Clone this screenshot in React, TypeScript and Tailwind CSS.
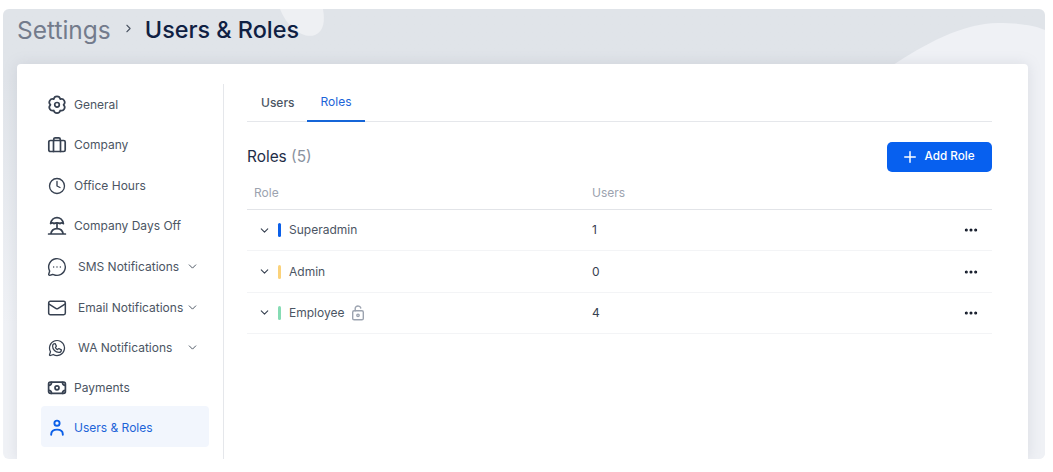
import React from "react";
import { ChevronDown, ChevronRight, Clock, Mail, MessageCircleMore, Plus, Ellipsis } from "lucide-react";
import { PiWhatsappLogo } from "react-icons/pi";

const s = { fill: "none", stroke: "currentColor", strokeWidth: 1.7, strokeLinecap: "round" as const, strokeLinejoin: "round" as const };

function Gear() {
  return (
    <svg width="20" height="20" viewBox="0 0 20 20" {...s}>
      <path d="M6.75 4.17A3.3 3.3 0 0 1 13.25 4.17A3.3 3.3 0 0 1 16.5 9.8A3.3 3.3 0 0 1 13.25 15.43A3.3 3.3 0 0 1 6.75 15.43A3.3 3.3 0 0 1 3.5 9.8A3.3 3.3 0 0 1 6.75 4.17Z" />
      <circle cx="10" cy="9.8" r="2.3" />
    </svg>
  );
}
function Briefcase() {
  return (
    <svg width="20" height="20" viewBox="0 0 20 20" {...s}>
      <rect x="1.8" y="5.5" width="16.4" height="11" rx="1.6" />
      <path d="M6.5 5.5v11M13.5 5.5v11M6.8 5.5V4.2c0-.8.6-1.4 1.4-1.4h3.6c.8 0 1.4.6 1.4 1.4v1.3" />
    </svg>
  );
}
function Beach() {
  return (
    <svg width="20" height="20" viewBox="0 0 20 20" {...s}>
      <path d="M3.6 7.6C4.2 4 7 1.6 10 1.6s5.8 2.4 6.4 6c-1.2-.9-2.4-.9-3.4 0-1-.9-5-.9-6 0-1-.9-2.2-.9-3.4 0Z" />
      <path d="M10 7v5.4M1.6 18h16.8M3.8 18c.5-3.2 3-5.4 6.2-5.4s5.7 2.2 6.2 5.4" />
    </svg>
  );
}
function Money() {
  return (
    <svg width="20" height="20" viewBox="0 0 20 20" {...s}>
      <rect x="1.6" y="4.2" width="16.8" height="11.2" rx="1.8" />
      <circle cx="10" cy="9.8" r="2" />
      <path d="M1.8 7.4c1.6 0 2.6-1 2.8-3M18.2 7.4c-1.6 0-2.6-1-2.8-3M1.8 12.4c1.6 0 2.6 1 2.8 3M18.2 12.4c-1.6 0-2.6 1-2.8 3" />
    </svg>
  );
}
function Person() {
  return (
    <svg width="20" height="20" viewBox="0 0 20 20" {...s} strokeWidth={1.9}>
      <circle cx="10" cy="5.2" r="2.6" />
      <path d="M4.2 16.8v-.6c0-2.8 2.4-4.6 5.8-4.6s5.8 1.8 5.8 4.6v.6" />
    </svg>
  );
}
function OpenLock() {
  return (
    <svg width="14" height="16" viewBox="0 0 14 16" fill="none" stroke="#9ca3af" strokeWidth="1.4" strokeLinecap="round" strokeLinejoin="round">
      <rect x="1.7" y="5.8" width="10.6" height="9" rx="1.4" />
      <path d="M4.2 5.8V3.4C4.2 2 5.4 1 7 1c1.4 0 2.5.8 2.8 2" />
      <circle cx="7" cy="10.3" r="1.2" />
    </svg>
  );
}

const items: { label: string; icon: React.ReactNode; sub?: boolean; active?: boolean; cls: string }[] = [
  { label: "General", icon: <Gear />, cls: "gap-[7px] pt-px" },
  { label: "Company", icon: <Briefcase />, cls: "gap-[7px] pt-px" },
  { label: "Office Hours", icon: <Clock size={18} strokeWidth={1.8} className="mx-px" />, cls: "gap-[7px] pt-[2px]" },
  { label: "Company Days Off", icon: <Beach />, cls: "gap-[7px] pt-px" },
  { label: "SMS Notifications", icon: <MessageCircleMore size={20} strokeWidth={1.7} />, sub: true, cls: "gap-[11px] pt-[3px]" },
  { label: "Email Notifications", icon: <Mail size={20} strokeWidth={1.8} />, sub: true, cls: "gap-[11px] pt-[4px]" },
  { label: "WA Notifications", icon: <PiWhatsappLogo size={20} />, sub: true, cls: "gap-[11px] pt-[4px]" },
  { label: "Payments", icon: <Money />, cls: "gap-[7px] pt-[3px]" },
  { label: "Users & Roles", icon: <Person />, active: true, cls: "gap-[7px] pt-[2px]" },
];

const roles = [
  { name: "Superadmin", color: "bg-[#0b5fe8]", users: 1 },
  { name: "Admin", color: "bg-[#fbd27a]", users: 0 },
  { name: "Employee", color: "bg-[#86dcb4]", users: 4, lock: true },
];

export default function App() {
  return (
    <div className="h-[472px] w-[1053px] overflow-hidden bg-white pl-[3px] pt-[9px] font-['Inter','Liberation_Sans',sans-serif]">
      <div className="relative flex h-[450px] w-[1042px] flex-col overflow-hidden rounded-md bg-gradient-to-b from-[#e0e4e9] from-15% to-[#f0f2f6] to-70%">
        <svg className="absolute left-0 top-0" width="1042" height="450" viewBox="0 0 1042 450" fill="none">
          <path d="M277 0h43c2 12 1 22-8 26-11 4-27-6-35-26Z" fill="#eef0f3" />
          <path d="M890 56c30-20 70-42 105-42 20 0 36 2 47 7v429H890Z" fill="#eff1f5" />
        </svg>
        <div className="relative flex h-[55px] shrink-0 items-start pl-[14px] pt-[4px] text-[24.5px] leading-[34px]">
          <span className="text-[#737b8c]">Settings</span>
          <ChevronRight size={13} strokeWidth={2} className="ml-[11px] mr-[10px] mt-[9px] text-[#4b5563]" />
          <span className="text-[23.4px] font-medium text-[#0f2042]">Users &amp; Roles</span>
        </div>
        <div className="relative ml-[14px] flex w-[1011px] flex-1 rounded-t-[4px] bg-white pl-[24px] pt-[20px] shadow-[0_0_14px_rgba(120,130,150,0.18)]">
          <nav className="flex h-[375px] w-[183px] shrink-0 flex-col border-r border-[#e5e7eb] pr-[14px]">
            {items.map((it) => (
              <div
                key={it.label}
                className={`flex h-[40.3px] shrink-0 items-center rounded-[4px] pl-[6px] text-[12px] ${it.cls} ${
                  it.active ? "bg-[#f2f6fd] text-[#1d64d8]" : "text-[#4b5563]"
                }`}
              >
                <span className={`flex w-[20px] shrink-0 justify-center ${it.active ? "text-[#0b5fe8]" : "text-[#374151]"}`}>{it.icon}</span>
                <span className="min-w-0 flex-1 whitespace-nowrap">{it.label}</span>
                {it.sub && <ChevronDown size={13} strokeWidth={1.8} className="-ml-[11px] mr-[10px] shrink-0 text-[#4b5563]" />}
              </div>
            ))}
          </nav>
          <main className="ml-[23px] w-[745px]">
            <div className="flex h-[38px] border-b border-[#e5e7eb] text-[12px]">
              <div className="flex h-[38px] w-[60px] items-center pl-[14px] font-medium text-[#4b5563]">Users</div>
              <div className="flex h-[38px] w-[58px] items-center justify-center border-b-2 border-[#1565d8] text-[#1d64d8]">Roles</div>
            </div>
            <div className="mt-[20px] flex h-[30px] items-center justify-between">
              <div className="text-[15.4px] text-[#1f2d47]">
                Roles <span className="text-[#8a92a0]">(5)</span>
              </div>
              <button className="flex h-[30px] w-[105px] items-center justify-center gap-[5px] rounded-[5px] bg-[#0760ef] pr-[3px] text-[11.7px] font-medium text-white">
                <Plus size={18} strokeWidth={2} />
                Add Role
              </button>
            </div>
            <div className="mt-[8px] flex h-[30px] items-center border-b border-[#e2e4e8] pb-[3px] text-[12px] text-[#9ca3af]">
              <span className="w-[345px] pl-[7px]">Role</span>
              <span>Users</span>
            </div>
            {roles.map((r) => (
              <div key={r.name} className="flex h-[41.4px] items-center border-b border-[#f3f4f6] text-[12px] text-[#4b5563]">
                <div className="flex w-[345px] items-center pl-[11px]">
                  <ChevronDown size={13} strokeWidth={2} className="text-[#374151]" />
                  <span className={`ml-[7px] h-[14px] w-[3px] rounded-full ${r.color}`} />
                  <span className="ml-[8px]">{r.name}</span>
                  {r.lock && <span className="ml-[7px] flex"><OpenLock /></span>}
                </div>
                <span className="text-[#374151]">{r.users}</span>
                <Ellipsis size={16} strokeWidth={2.6} className="ml-auto mr-[13px] text-[#111827]" />
              </div>
            ))}
          </main>
        </div>
      </div>
    </div>
  );
}
